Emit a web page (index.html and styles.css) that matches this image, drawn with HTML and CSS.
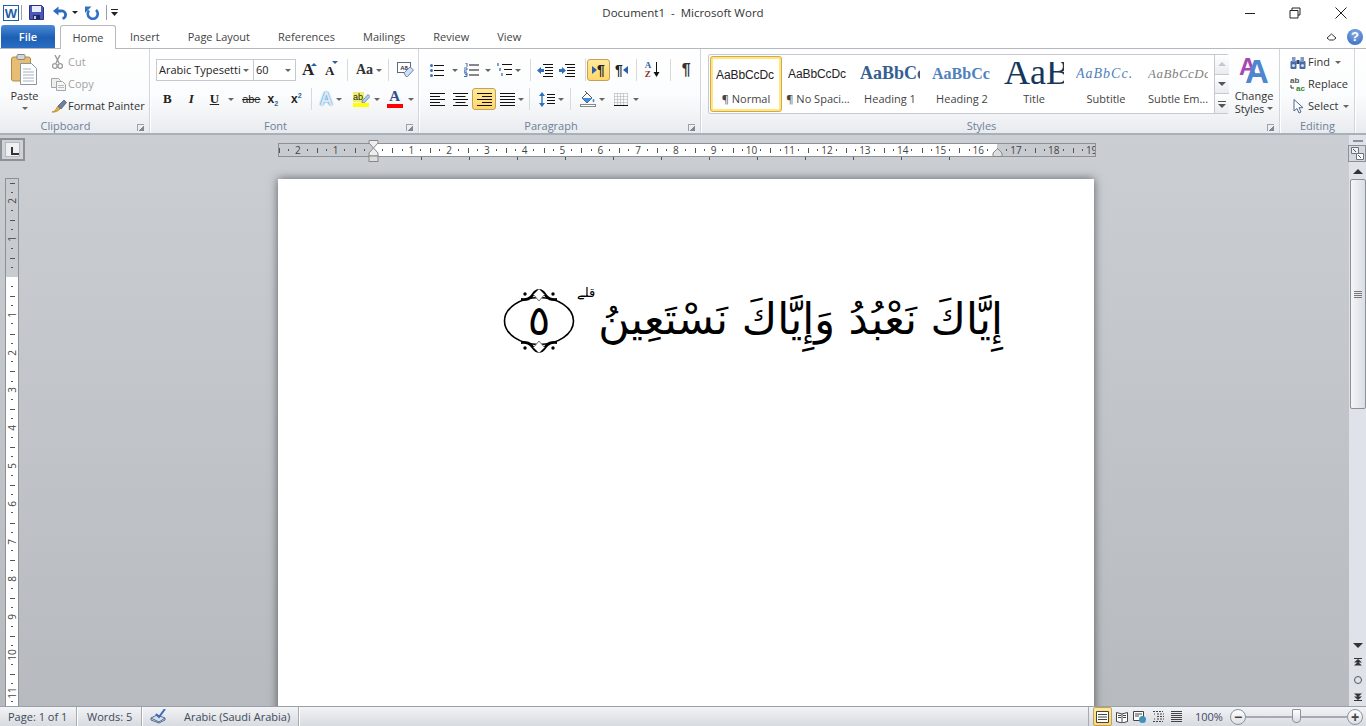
FILE: index.html
```html
<!DOCTYPE html>
<html lang="en">
<head>
<meta charset="utf-8">
<title>Document1 - Microsoft Word</title>
<link rel="stylesheet" href="styles.css">
</head>
<body>
<svg class="defs" aria-hidden="true">
  <defs>
    <symbol id="al" viewBox="0 0 15 13"><path d="M0 .5h15M0 3.5h10M0 6.5h15M0 9.5h10M0 12.5h15" stroke="#111" fill="none"/></symbol>
    <symbol id="ac" viewBox="0 0 15 13"><path d="M0 .5h15M2.500 3.500h10M0 6.500h15M2.500 9.500h10M0 12.500h15" stroke="#111" fill="none"/></symbol>
    <symbol id="ar" viewBox="0 0 15 13"><path d="M0 .5h15M5 3.500h10M0 6.500h15M5 9.500h10M0 12.500h15" stroke="#111" fill="none"/></symbol>
    <symbol id="aj" viewBox="0 0 15 13"><path d="M0 .5h15M0 3.500h15M0 6.500h15M0 9.500h15M0 12.500h15" stroke="#111" fill="none"/></symbol>
  </defs>
</svg>

<header class="titlebar">
  <div class="qat">
    <svg class="q-word" width="16" height="16" viewBox="0 0 16 16"><rect x=".5" y=".5" width="15" height="15" fill="#fff" stroke="#1f5fa8"/><text x="8" y="13" text-anchor="middle" class="svg-w">W</text></svg>
    <span class="q-sep q-sep1"></span>
    <svg class="q-save" width="15" height="15" viewBox="0 0 15 15"><path d="M.5.500h12l2 2v12H.500z" fill="#4b57b8" stroke="#2b3380"/><rect x="3" y="1" width="9" height="6" fill="#e8edf8"/><rect x="4" y="10" width="7" height="4.500" fill="#20285f"/><rect x="5" y="11" width="2" height="3" fill="#c4cbe6"/></svg>
    <svg class="q-undo" width="14" height="14" viewBox="0 0 14 14"><path d="M3 5h5a3.800 3.800 0 0 1 1.500 7.500" fill="none" stroke="#2a6cc0" stroke-width="2.800"/><path d="M0 5 5.500 .5v9z" fill="#2a6cc0"/></svg>
    <span class="drop dark q-d1"></span>
    <svg class="q-redo" width="14" height="14" viewBox="0 0 14 14"><path d="M4 4.500A5 5 0 1 0 11 4" fill="none" stroke="#2e72c8" stroke-width="2.600"/><path d="M0 .5h6.500L0 7z" fill="#2e72c8"/></svg>
    <span class="q-sep q-sep2"></span>
    <svg class="q-cust" width="7" height="8" viewBox="0 0 7 8"><path d="M0 .5h7" stroke="#222"/><path d="M0 3h7L3.500 7z" fill="#222"/></svg>
  </div>
  <div class="doc-title">Document1&nbsp; -&nbsp; Microsoft Word</div>
  <div class="winctl">
    <svg class="w-min" width="12" height="12" viewBox="0 0 12 12"><path d="M1 6.500h10" stroke="#222"/></svg>
    <svg class="w-res" width="12" height="12" viewBox="0 0 12 12"><path d="M3 3V1h8v7H9M1 3.500h8v7.500H1z" fill="none" stroke="#222"/></svg>
    <svg class="w-cls" width="12" height="12" viewBox="0 0 12 12"><path d="M.5.500l11 11M11.500.500l-11 11" stroke="#222"/></svg>
  </div>
</header>

<nav class="tabs">
  <div class="tab-file">File</div>
  <div class="tab tab-home">Home</div>
  <div class="tab">Insert</div>
  <div class="tab">Page Layout</div>
  <div class="tab">References</div>
  <div class="tab">Mailings</div>
  <div class="tab">Review</div>
  <div class="tab">View</div>
  <div class="tab-end">
    <svg width="11" height="8" viewBox="0 0 11 8"><path d="M1 5 5.500 1 10 5 7.500 7h-4z" fill="none" stroke="#333"/></svg>
    <span class="help">?</span>
  </div>
</nav>

<section class="ribbon">
  <!-- Clipboard -->
  <div class="group g-clip">
    <div class="g-body clip-body">
      <div class="paste">
        <svg width="27" height="31" viewBox="0 0 27 31"><rect x=".5" y="3" width="19" height="24" rx="2" fill="#e6bd73" stroke="#b38a45"/><rect x="6" y=".5" width="8" height="5" rx="1" fill="#d5d5d5" stroke="#888"/><path d="M9.500 9.500h11l5 5v16h-16z" fill="#fff" stroke="#8c95a3"/><path d="M12 15h8M12 18h11M12 21h11M12 24h11M12 27h11" stroke="#a9b3c2"/></svg>
        <span class="paste-label">Paste</span>
        <span class="drop"></span>
      </div>
      <div class="clip-list">
        <div class="clip-item off">
          <svg class="ci-cut" width="11" height="14" viewBox="0 0 11 14"><path d="M3 0l4 8M8 0 4 8" stroke="#9a9a9a" stroke-width="1.400" fill="none"/><circle cx="2.800" cy="11" r="2.300" fill="none" stroke="#9a9a9a" stroke-width="1.300"/><circle cx="8.200" cy="11" r="2.300" fill="none" stroke="#9a9a9a" stroke-width="1.300"/></svg>
          <span>Cut</span>
        </div>
        <div class="clip-item off">
          <svg class="ci-copy" width="15" height="13" viewBox="0 0 15 13"><path d="M.5.500h7l2 2v7h-9z" fill="#eee" stroke="#a5a5a5"/><path d="M5.500 3.500h6l3 3v6h-9z" fill="#f5f5f5" stroke="#a5a5a5"/><path d="M7 7.500h6M7 9.500h6" stroke="#bbb"/></svg>
          <span>Copy</span>
        </div>
        <div class="clip-item">
          <svg class="ci-fp" width="16" height="14" viewBox="0 0 16 14"><path d="M1 13C3 13 5 11 6.500 7.500L9 10c-2 2-5 3.500-8 3z" fill="#e8b33c" stroke="#a4791c" stroke-width=".7"/><path d="M7 7l3 3 5.500-6.500L13 1z" fill="#6d7fa3" stroke="#444e66" stroke-width=".7"/></svg>
          <span>Format Painter</span>
        </div>
      </div>
    </div>
    <div class="g-label">Clipboard<span class="launcher"></span></div>
  </div>

  <!-- Font -->
  <div class="group g-font">
    <div class="g-body rows">
      <div class="row">
        <div class="combo c-font"><span>Arabic Typesetti</span><span class="drop"></span></div>
        <div class="combo c-size"><span>60</span><span class="drop"></span></div>
        <span class="ic grow"><span class="big-a">A</span><i class="tip up"></i></span>
        <span class="ic shrink"><span class="small-a">A</span><i class="tip down"></i></span>
        <span class="vsep s1"></span>
        <span class="aa">Aa</span><span class="drop d-aa"></span>
        <span class="vsep s2"></span>
        <svg class="clear" width="17" height="16" viewBox="0 0 17 16"><rect x=".5" y=".5" width="13" height="10" fill="#fff" stroke="#5a6b85"/><text x="7" y="8" text-anchor="middle" class="svg-tiny">A8</text><path d="M7 11l6-6 3.500 3-6 6.500H9z" fill="#cfe0f5" stroke="#6a86ac"/></svg>
      </div>
      <div class="row r2">
        <span class="fmt b">B</span>
        <span class="fmt i">I</span>
        <span class="fmt u">U</span><span class="drop d-u"></span>
        <span class="fmt abe">abe</span>
        <span class="fmt x1">x<sub>2</sub></span>
        <span class="fmt x2">x<sup>2</sup></span>
        <span class="vsep s3"></span>
        <span class="fx">A</span><span class="drop d-fx"></span>
        <svg class="hl" width="17" height="15" viewBox="0 0 17 15"><rect x="0" y="0" width="11" height="10" fill="#f0ee6a"/><text x="0" y="8" class="svg-ab">ab</text><path d="M9 9l6-6.500 2 2-6 6.500H9z" fill="#b8cde8" stroke="#5c7aa6" stroke-width=".8"/><rect y="11" width="16" height="4" fill="#ffff00"/></svg>
        <span class="drop d-hl"></span>
        <span class="fc"><span class="fc-a">A</span><i></i></span><span class="drop d-fc"></span>
      </div>
    </div>
    <div class="g-label">Font<span class="launcher"></span></div>
  </div>

  <!-- Paragraph -->
  <div class="group g-para">
    <div class="g-body rows">
      <div class="row">
        <svg class="p-bul" width="14" height="13" viewBox="0 0 14 13"><path d="M4 1.500h10M4 6.500h10M4 11.500h10" stroke="#111"/><circle cx="1.500" cy="1.500" r="1.500" fill="#3c6fb5"/><circle cx="1.500" cy="6.500" r="1.500" fill="#3c6fb5"/><circle cx="1.500" cy="11.500" r="1.500" fill="#3c6fb5"/></svg>
        <span class="drop d-p1"></span>
        <svg class="p-num" width="15" height="14" viewBox="0 0 15 14"><path d="M5 2h10M5 7h10M5 12h10" stroke="#111"/><path d="M1 0h2v4M0 5h3v2H0v2h3M0 10h3v3.500H0M1 11.700h2" fill="none" stroke="#3c6fb5"/></svg>
        <span class="drop d-p2"></span>
        <svg class="p-multi" width="15" height="14" viewBox="0 0 15 14"><path d="M5 1.500h10M7 6.500h8M9 11.500h6" stroke="#111"/><path d="M1 0v3M3 5v3M5 10v3" stroke="#3c6fb5" stroke-width="1.300"/></svg>
        <span class="drop d-p3"></span>
        <span class="vsep s4"></span>
        <svg class="p-dec" width="16" height="13" viewBox="0 0 16 13"><path d="M6 .5h10M8 3.500h8M8 6.500h8M8 9.500h8M6 12.500h10" stroke="#111"/><path d="M0 6.500 4 3v2h3v3H4v2z" fill="#2f6fc0"/></svg>
        <svg class="p-inc" width="16" height="13" viewBox="0 0 16 13"><path d="M6 .5h10M8 3.500h8M8 6.500h8M8 9.500h8M6 12.500h10" stroke="#111"/><path d="M7 6.500 3 3v2H0v3h3v2z" fill="#2f6fc0"/></svg>
        <span class="vsep s5"></span>
        <span class="act ltr"><i class="tri-r"></i><b>¶</b></span>
        <span class="rtl"><b>¶</b><i class="tri-l"></i></span>
        <span class="vsep s6"></span>
        <span class="sort"><span class="sort-a"><em>A</em><em class="z">Z</em></span><svg width="7" height="16" viewBox="0 0 7 16"><path d="M3.500 0v13" stroke="#111"/><path d="M.5 10h6l-3 5z" fill="#111"/></svg></span>
        <span class="vsep s7"></span>
        <span class="pil">¶</span>
      </div>
      <div class="row">
        <svg class="a1" width="15" height="13"><use href="#al"/></svg>
        <svg class="a2" width="15" height="13"><use href="#ac"/></svg>
        <span class="act a3"><svg width="15" height="13"><use href="#ar"/></svg></span>
        <svg class="a4" width="15" height="13"><use href="#aj"/></svg>
        <span class="drop d-j"></span>
        <span class="vsep s8"></span>
        <svg class="ls" width="16" height="15" viewBox="0 0 16 15"><path d="M3 3v9" stroke="#2f6fc0" stroke-width="1.400"/><path d="M3 0 6 4H0zM3 15 6 11H0z" fill="#2f6fc0"/><path d="M8 2.500h8M8 5.500h8M8 8.500h8M8 11.500h8" stroke="#111"/></svg>
        <span class="drop d-ls"></span>
        <span class="vsep s9"></span>
        <svg class="shade" width="16" height="16" viewBox="0 0 16 16"><path d="M2 7 7 2l5 5-5 5z" fill="#fff" stroke="#555"/><path d="M2 7h10l-5 5z" fill="#3d8edb"/><path d="M7 2 5 0" stroke="#555"/><path d="M13 8s-1 2 0 3 2-1 1-3z" fill="#3d8edb"/><rect x=".5" y="13.500" width="15" height="2" fill="#fff" stroke="#888"/></svg>
        <span class="drop d-sh"></span>
        <svg class="bord" width="14" height="13" viewBox="0 0 14 13"><path d="M.5.500h13M.5 3.500h13M.5 6.500h13M.5 9.500h13M.5.500v12M3.500.500v12M6.500.500v12M9.500.500v12M13.500.500v12" stroke="#aaa" stroke-dasharray="1 1"/><path d="M0 12.500h14" stroke="#111"/></svg>
        <span class="drop d-bo"></span>
      </div>
    </div>
    <div class="g-label">Paragraph<span class="launcher"></span></div>
  </div>

  <!-- Styles -->
  <div class="group g-styles">
    <div class="g-body styles-body">
      <div class="gallery">
        <div class="st st-on"><div class="pv pv-n">AaBbCcDc</div><div class="nm">¶ Normal</div></div>
        <div class="st"><div class="pv pv-n">AaBbCcDc</div><div class="nm">¶ No Spaci...</div></div>
        <div class="st"><div class="pv pv-h1">AaBbCc</div><div class="nm">Heading 1</div></div>
        <div class="st"><div class="pv pv-h2">AaBbCc</div><div class="nm">Heading 2</div></div>
        <div class="st"><div class="pv pv-t">AaB</div><div class="nm">Title</div></div>
        <div class="st"><div class="pv pv-s">AaBbCc.</div><div class="nm">Subtitle</div></div>
        <div class="st"><div class="pv pv-e">AaBbCcDc</div><div class="nm">Subtle Em...</div></div>
        <div class="gal-btns">
          <span class="gb"><i class="gup"></i></span>
          <span class="gb"><i class="gdn"></i></span>
          <span class="gb"><i class="gmore"></i></span>
        </div>
      </div>
      <div class="change">
        <svg width="32" height="32" viewBox="0 0 32 32"><text x="1" y="23" class="svg-aa1">A</text><text x="7" y="31" class="svg-aa2">A</text></svg>
        <span class="ch-t">Change</span>
        <span class="ch-t">Styles<span class="drop d-ch"></span></span>
      </div>
    </div>
    <div class="g-label">Styles<span class="launcher"></span></div>
  </div>

  <!-- Editing -->
  <div class="group g-edit">
    <div class="g-body edit-list">
      <div class="ed">
        <svg width="15" height="13" viewBox="0 0 15 13"><rect x="0" y="5" width="6" height="8" rx="1" fill="#4a69a5"/><rect x="9" y="5" width="6" height="8" rx="1" fill="#4a69a5"/><rect x="1.500" y="1" width="3.500" height="5" fill="#7f98c4"/><rect x="10" y="1" width="3.500" height="5" fill="#7f98c4"/><rect x="6" y="4" width="3" height="4" fill="#33486f"/><circle cx="3" cy="9.500" r="1.600" fill="#cfdcf0"/><circle cx="12" cy="9.500" r="1.600" fill="#cfdcf0"/></svg>
        <span>Find</span><span class="drop d-ed"></span>
      </div>
      <div class="ed">
        <svg width="16" height="15" viewBox="0 0 16 15"><text x="0" y="6" class="svg-rp">ab</text><text x="6" y="14" class="svg-rp g">ac</text><path d="M1 8v3h3" fill="none" stroke="#333"/></svg>
        <span>Replace</span>
      </div>
      <div class="ed">
        <svg width="15" height="15" viewBox="0 0 15 15"><path d="M3.500 .5v11.500l3-2.500 2 4.500 2-1-2-4.300h4z" fill="#fff" stroke="#50688c"/></svg>
        <span>Select</span><span class="drop d-ed"></span>
      </div>
    </div>
    <div class="g-label">Editing</div>
  </div>
</section>

<main class="workspace">
  <aside class="left-col">
    <div class="tabstop"><span class="tab-l"></span></div>
    <div class="vruler">
      <span class="vc"><b>2</b></span><span class="vc"><b>1</b></span><span class="vc"></span>
      <span class="vc"><b>1</b></span><span class="vc"><b>2</b></span><span class="vc"><b>3</b></span><span class="vc"><b>4</b></span><span class="vc"><b>5</b></span><span class="vc"><b>6</b></span><span class="vc"><b>7</b></span><span class="vc"><b>8</b></span><span class="vc"><b>9</b></span><span class="vc"><b>10</b></span><span class="vc"><b>11</b></span>
    </div>
  </aside>

  <div class="canvas">
    <div class="hruler-wrap">
      <div class="hruler">
        <span class="hc">2</span><span class="hc">1</span><span class="hc"></span>
        <span class="hc">1</span><span class="hc">2</span><span class="hc">3</span><span class="hc">4</span><span class="hc">5</span><span class="hc">6</span><span class="hc">7</span><span class="hc">8</span><span class="hc">9</span><span class="hc">10</span><span class="hc">11</span><span class="hc">12</span><span class="hc">13</span><span class="hc">14</span><span class="hc">15</span><span class="hc">16</span><span class="hc">17</span><span class="hc">18</span><span class="hc">19</span>
      </div>
      <svg class="ind-l" width="11" height="22" viewBox="0 0 11 22"><path d="M1 .5h9V3L5.500 8 1 3z" fill="#eee" stroke="#888"/><path d="M5.500 8 10 13v3H1v-3z" fill="#eee" stroke="#888"/><rect x="1" y="16" width="9" height="5.500" fill="#ddd" stroke="#888"/></svg>
      <svg class="ind-r" width="11" height="9" viewBox="0 0 11 9"><path d="M5.500 .5 10 5v3.500H1V5z" fill="#ddd" stroke="#888"/></svg>
      <div class="stops"></div>
    </div>
    <article class="page">
      <p class="ayah" dir="rtl" lang="ar"><span class="ayah-text">إِيَّاكَ نَعْبُدُ وَإِيَّاكَ نَسْتَعِينُ</span> <span class="waqf">قلے</span> <svg class="verse" width="74" height="66" viewBox="0 0 74 66"><ellipse cx="37" cy="33" rx="34.500" ry="23.500" fill="#fff" stroke="#000" stroke-width="1.600"/><path d="M19 11.500C25 12 28 11 31 6.500 33 3.500 35 2.500 37 2.500s4 1 6 4c3 4.500 6 5.500 12 5M19 54.500C25 54 28 55 31 59.500c2 3 4 4 6 4s4-1 6-4c3-4.500 6-5.500 12-5" fill="none" stroke="#000" stroke-width="2.800"/><path d="M37 1l5.500 5.500L37 13l-5.500-6.500zM37 65l5.500-5.500L37 53l-5.500 6.500z" fill="#fff" stroke="#777"/><circle cx="23" cy="6" r="1.700"/><circle cx="51" cy="6" r="1.700"/><circle cx="23" cy="60" r="1.700"/><circle cx="51" cy="60" r="1.700"/><text x="37" y="47" text-anchor="middle" class="svg-five">٥</text></svg></p>
    </article>
  </div>

  <aside class="vscroll">
    <span class="split"></span>
    <span class="vr-btn"><svg width="13" height="13" viewBox="0 0 13 13"><path d="M.5.500h7v6h-7z" fill="#eef0f4" stroke="#6d737c"/><path d="M5.500 6.500h7v6h-7z" fill="#fff" stroke="#6d737c"/><path d="M2 2l3 3M7 8l3 3" stroke="#555"/></svg></span>
    <span class="sb up"><i></i></span>
    <div class="thumb"><span class="grip"></span></div>
    <span class="sb-fill"></span>
    <span class="sb dn"><i></i></span>
    <span class="sb nav"><svg width="8" height="8" viewBox="0 0 8 8"><path d="M0 .5h8" stroke="#333"/><path d="M4 1 8 4.500H0zM4 4 8 7.500H0z" fill="#333"/></svg></span>
    <span class="sb nav"><span class="circle"></span></span>
    <span class="sb nav"><svg width="8" height="8" viewBox="0 0 8 8"><path d="M0 7.500h8" stroke="#333"/><path d="M4 7 8 3.500H0zM4 4 8 .5H0z" fill="#333"/></svg></span>
  </aside>
</main>

<footer class="status">
  <span class="st-cell c1">Page: 1 of 1</span>
  <span class="st-cell c2">Words: 5</span>
  <span class="st-cell c3">
    <svg width="17" height="15" viewBox="0 0 17 15"><path d="M1 9l6-3 8 3-6 4z" fill="#d5dfee" stroke="#51698f"/><path d="M1 9v2l8 3 6-3V9" fill="none" stroke="#51698f"/><path d="M6 5l3 3 6-8" fill="none" stroke="#3d6cb5" stroke-width="2"/></svg>
    <span class="lang">Arabic (Saudi Arabia)</span>
  </span>
  <div class="st-right">
    <span class="view on"><svg width="13" height="12"><path d="M.5.500h12v11H.500zM2 3.500h9M2 6h9M2 8.500h9" fill="#fff" stroke="#444"/></svg></span>
    <svg class="v2" width="12" height="12" viewBox="0 0 12 12"><path d="M.5 1.500 6 3l5.500-1.500v9L6 12 .5 10.500zM6 3v9M2 4.500h3M2 6.500h3M7 4.500h3M7 6.500h3" fill="#fff" stroke="#444"/></svg>
    <svg class="v3" width="13" height="12" viewBox="0 0 13 12"><path d="M.5.500h10v9H.500zM2 3h7M2 5h4" fill="#fff" stroke="#444"/><circle cx="9.500" cy="8.500" r="3.500" fill="#3f8dd0"/><path d="M8 7l3 1-2 3z" fill="#4fa64a"/></svg>
    <svg class="v4" width="11" height="11" viewBox="0 0 11 11"><path d="M0 .5h10M4 3h7M4 5.500h7M4 8h7M0 10.500h10M1 3h1M1 8h1" stroke="#444" stroke-dasharray="2 1"/></svg>
    <svg class="v5" width="11" height="11" viewBox="0 0 11 11"><path d="M0 .5h11M0 2.500h11M0 4.500h11M0 6.500h11M0 8.500h11M0 10.500h11" stroke="#444"/></svg>
    <span class="zoompct">100%</span>
    <span class="zbtn z-minus">−</span>
    <span class="zslider"><i></i></span>
    <span class="zbtn z-plus">+</span>
  </div>
</footer>
</body>
</html>
```

FILE: styles.css
```css
* { box-sizing: border-box; }
html, body { margin: 0; padding: 0; }
body {
  width: 1366px; height: 726px; overflow: hidden;
  display: flex; flex-direction: column;
  background: #fff;
  font: 11px/1.2 "Open Sans", "Noto Sans", sans-serif;
  color: #333;
}
.defs { position: absolute; width: 0; height: 0; }
svg { display: block; flex: none; }
i, em { font-style: normal; }

/* title bar */
.titlebar { height: 25px; flex: none; display: grid; grid-template-columns: 1fr auto 1fr; align-items: center; background: #fff; }
.qat { display: flex; align-items: center; padding-left: 3px; }
.q-sep { width: 1px; height: 15px; background: #9aa0a8; }
.q-sep1 { margin-left: 2px; }
.q-save { margin-left: 7px; }
.q-undo { margin-left: 9px; }
.q-d1 { margin-left: 5px; }
.q-redo { margin-left: 7px; }
.q-sep2 { margin-left: 7px; }
.q-cust { margin-left: 4px; }
.svg-w { font: bold 13px "Liberation Sans", sans-serif; fill: #1f5fa8; }
.doc-title { font-size: 11.500px; color: #333; }
.winctl { display: flex; justify-content: flex-end; align-items: center; }
.w-res { margin-left: 33px; }
.w-cls { margin-left: 34px; margin-right: 19px; }

/* tabs */
.tabs { height: 24px; flex: none; display: flex; align-items: stretch; padding-left: 1px; border-bottom: 1px solid #b4b9c0; background: #fff; font-size: 11px; }
.tab-file { width: 54px; display: flex; align-items: center; justify-content: center; color: #fff; font-weight: 600; background: linear-gradient(#4b8ad6, #1d5fb4 55%, #2a6dc2); border-radius: 3px 3px 0 0; }
.tab { padding: 0 14px; display: flex; align-items: center; color: #444; }
.tab-home { width: 56px; margin-left: 5px; margin-bottom: -1px; padding: 0; justify-content: center; background: #fff; border: 1px solid #b4b9c0; border-bottom: 0; border-radius: 3px 3px 0 0; position: relative; }
.tab-end { margin-left: auto; display: flex; align-items: center; padding-right: 3px; }
.help { width: 16px; height: 16px; margin-left: 10px; border-radius: 50%; background: radial-gradient(circle at 50% 30%, #86ade6, #2f64b8); color: #fff; font: bold 13px/16px "Liberation Sans", sans-serif; text-align: center; }

/* ribbon */
.ribbon { height: 86px; flex: none; display: flex; background: linear-gradient(#fff, #fbfcfd 55%, #e8ebef); border-bottom: 2px solid #aab0b8; }
.group { display: flex; flex-direction: column; border-right: 1px solid #d2d6dc; box-shadow: 1px 0 0 #fff; margin-right: 1px; }
.g-body { flex: 1; min-height: 0; }
.g-label { height: 16px; flex: none; position: relative; padding-right: 18px; text-align: center; color: #6f7f95; font-size: 11px; line-height: 17px; }
.launcher { position: absolute; right: 5px; top: 7px; width: 7px; height: 7px; border: 1px solid #9aa1ab; border-width: 1px 0 0 1px; background: linear-gradient(135deg, transparent 55%, #7f8793 55%); }
.g-clip { width: 150px; }
.g-font { width: 268px; }
.g-para { width: 281px; }
.g-styles { width: 578px; }
.g-edit { width: 74px; }
.g-edit .g-label { padding-right: 0; }

.clip-body { display: flex; }
.paste { width: 49px; flex: none; display: flex; flex-direction: column; align-items: center; padding-top: 5px; }
.paste-label { margin-top: 4px; color: #333; }
.paste .drop { margin-top: 5px; }
.clip-list { padding-top: 2px; }
.clip-item { height: 22px; display: flex; align-items: center; color: #333; padding-left: 2px; }
.ci-cut { margin: 0 5px 0 1px; }
.ci-copy { margin-right: 2px; }
.ci-fp { margin-right: 1px; }
.clip-item.off { color: #a3a3a3; }
.clip-item span { white-space: nowrap; }

.drop { display: inline-block; width: 0; height: 0; flex: none; border: 3px solid transparent; border-top: 3px solid #666; border-bottom: 0; }
.drop.dark { border-top-color: #222; }

.rows { display: flex; flex-direction: column; padding-top: 10px; }
.row { height: 22px; display: flex; align-items: center; white-space: nowrap; }
.row + .row { margin-top: 7px; }
.vsep { width: 1px; height: 22px; flex: none; background: #d6d9de; }
.g-font .rows { padding-left: 5px; }
.g-para .rows { padding-left: 10px; }

.combo { height: 22px; display: flex; align-items: center; justify-content: space-between; padding: 0 4px 0 2px; border: 1px solid #c6cad0; background: #fff; color: #222; }
.c-font { width: 98px; }
.c-size { width: 43px; margin-left: -1px; }
.ic { position: relative; display: block; flex: none; font-family: "Liberation Serif", serif; font-weight: bold; color: #222; }
.grow { width: 15px; margin-left: 6px; }
.shrink { width: 13px; margin-left: 8px; }
.big-a { font-size: 17px; line-height: 18px; display: block; }
.small-a { font-size: 13px; line-height: 18px; display: block; padding-top: 2px; }
.tip { position: absolute; right: 0; top: 1px; border: 3px solid transparent; }
.tip.up { border-bottom: 3px solid #2f5e9e; border-top: 0; }
.tip.down { border-top: 3px solid #2f5e9e; border-bottom: 0; }
.s1 { margin-left: 9px; }
.aa { margin-left: 8px; font: bold 14px "Liberation Serif", serif; color: #333; }
.d-aa { margin-left: 3px; }
.s2 { margin-left: 6px; }
.clear { margin-left: 8px; }
.svg-tiny { font: bold 6px "Liberation Sans", sans-serif; fill: #334; }

.fmt { flex: none; color: #222; font-family: "Liberation Serif", serif; font-weight: bold; font-size: 13px; line-height: 16px; }
.b { margin-left: 7px; }
.i { margin-left: 17px; font-style: italic; }
.u { margin-left: 16px; text-decoration: underline; }
.d-u { margin-left: 9px; }
.abe { margin-left: 8px; font-family: "Liberation Sans", sans-serif; font-weight: normal; font-size: 11px; text-decoration: line-through; }
.x1 { margin-left: 7px; font-family: "Liberation Sans", sans-serif; font-size: 12px; }
.x2 { margin-left: 13px; font-family: "Liberation Sans", sans-serif; font-size: 12px; }
.fmt sub, .fmt sup { font-size: 7px; color: #2f5e9e; line-height: 0; }
.s3 { margin-left: 9px; }
.fx { margin-left: 8px; font: bold 18px/18px "Liberation Sans", sans-serif; color: #d7e8f8; text-shadow: 0 0 1px #2f7fc8, 0 0 2px #4d9ad8; }
.d-fx { margin-left: 3px; }
.hl { margin-left: 11px; }
.svg-ab { font: 9px "Liberation Sans", sans-serif; fill: #222; }
.d-hl { margin-left: 4px; }
.fc { margin-left: 7px; width: 16px; display: flex; flex-direction: column; align-items: center; }
.fc-a { font: bold 15px/13px "Liberation Serif", serif; color: #2b4f88; }
.fc i { display: block; width: 16px; height: 4px; background: #f00; margin-top: 1px; }
.d-fc { margin-left: 5px; }

.d-p1 { margin-left: 8px; }
.p-num { margin-left: 6px; }
.d-p2 { margin-left: 6px; }
.p-multi { margin-left: 6px; }
.d-p3 { margin-left: 3px; }
.s4 { margin-left: 9px; }
.p-dec { margin-left: 6px; }
.p-inc { margin-left: 6px; }
.s5 { margin-left: 10px; }
.act { flex: none; height: 22px; display: flex; align-items: center; justify-content: center; background: linear-gradient(#ffe99a, #ffd76a); border: 1px solid #c2a15a; border-radius: 3px; }
.ltr { width: 23px; margin-left: 1px; }
.ltr b, .rtl b { font: bold 14px/14px "Liberation Sans", sans-serif; color: #222; }
.tri-r { width: 0; height: 0; border: 4px solid transparent; border-left: 5px solid #2a5ea8; border-right: 0; }
.tri-l { width: 0; height: 0; border: 4px solid transparent; border-right: 5px solid #2a5ea8; border-left: 0; }
.rtl { margin-left: 5px; display: flex; align-items: center; }
.s6 { margin-left: 8px; }
.sort { margin-left: 8px; display: flex; align-items: center; width: 18px; }
.sort-a { display: flex; flex-direction: column; font: bold 9px/9px "Liberation Serif", serif; color: #2f5e9e; margin-right: 2px; }
.sort-a .z { color: #8a2f2f; }
.s7 { margin-left: 7px; }
.pil { margin-left: 11px; font: bold 16px/16px "Liberation Sans", sans-serif; color: #333; }
.a2 { margin-left: 8px; }
.a3 { width: 24px; margin-left: 4px; }
.a4 { margin-left: 4px; }
.d-j { margin-left: 3px; }
.s8 { margin-left: 5px; }
.ls { margin-left: 9px; }
.d-ls { margin-left: 3px; }
.s9 { margin-left: 6px; }
.shade { margin-left: 9px; }
.d-sh { margin-left: 3px; }
.bord { margin-left: 9px; }
.d-bo { margin-left: 5px; }

/* styles */
.styles-body { display: flex; padding: 5px 0 0 6px; }
.gallery { width: 521px; height: 60px; display: flex; border: 1px solid #c6cad0; border-radius: 2px; background: #fff; padding: 1px 0 1px 1px; }
.st { width: 72px; flex: none; display: flex; flex-direction: column; align-items: center; }
.st-on { border: 3px solid #ffe680; outline: 1px solid #d2a94a; outline-offset: -1px; border-radius: 3px; }
.pv { width: 60px; height: 35px; overflow: hidden; display: flex; align-items: center; white-space: nowrap; justify-content: center; color: #222; }
.st-on .pv { height: 32px; }
.nm { font-size: 11px; color: #444; padding-top: 1px; white-space: nowrap; }
.pv-n { font: 12px "Liberation Sans", sans-serif; letter-spacing: -.1px; justify-content: flex-start; }
.pv-h1 { font: bold 18px "Liberation Serif", serif; color: #365f91; justify-content: flex-start; }
.pv-h2 { font: bold 16px "Liberation Serif", serif; color: #4f81bd; justify-content: flex-start; }
.pv-t { height: 24px; margin: 6px 0 5px; padding-bottom: 2px; font: 36px/24px "Liberation Serif", serif; color: #17365d; align-items: flex-end; justify-content: flex-start; }
.pv-s { font: italic 14px "Liberation Serif", serif; color: #4f81bd; letter-spacing: 1px; justify-content: flex-start; }
.pv-e { font: italic 13px "Liberation Serif", serif; color: #808080; letter-spacing: .5px; justify-content: flex-start; }
.gal-btns { margin-left: auto; width: 15px; flex: none; display: flex; flex-direction: column; margin-top: -1px; margin-bottom: -1px; border-left: 1px solid #c6cad0; }
.gb { flex: 1; display: flex; align-items: center; justify-content: center; border-bottom: 1px solid #c6cad0; background: linear-gradient(#fff, #e9ebef); }
.gb:last-child { border-bottom: 0; }
.gup { border: 4px solid transparent; border-bottom: 4px solid #c4c7cc; border-top: 0; }
.gdn { border: 4px solid transparent; border-top: 4px solid #555; border-bottom: 0; }
.gmore { width: 8px; height: 6px; border-top: 1px solid #555; }
.gmore::after { content: ""; display: block; margin-top: 2px; border: 4px solid transparent; border-top: 4px solid #555; border-bottom: 0; }
.change { flex: 1; display: flex; flex-direction: column; align-items: center; color: #333; }
.change svg { margin-bottom: 5px; margin-top: -2px; }
.ch-t { line-height: 13px; display: flex; align-items: center; }
.d-ch { margin-left: 3px; }
.svg-aa1 { font: bold 24px "Liberation Sans", sans-serif; fill: #a548b0; }
.svg-aa2 { font: bold 33px "Liberation Sans", sans-serif; fill: #4e86cf; }

.edit-list { padding: 2px 0 0 9px; }
.ed { height: 22px; display: flex; align-items: center; color: #333; }
.ed span:first-of-type { margin-left: 2px; }
.ed svg { width: 16px; }
.d-ed { margin-left: 5px; }
.svg-rp { font: bold 8px "Liberation Sans", sans-serif; fill: #555; }
.svg-rp.g { fill: #2c8a2c; }

/* workspace */
.workspace { flex: 1; min-height: 0; display: flex; background: linear-gradient(#cbcfd4, #b7babe); }
.left-col { width: 25px; flex: none; padding-top: 3px; }
.tabstop { width: 25px; height: 23px; border: 2px solid #8d9197; background: #cfd2d7; display: flex; align-items: center; justify-content: center; }
.tab-l { width: 15px; height: 15px; background: #eef0f2; border: 1px solid #b5b9bf; display: block; }
.tab-l::after { content: ""; display: block; width: 6px; height: 6px; margin: 4px 0 0 5px; border-left: 2px solid #333; border-bottom: 2px solid #333; }
.vruler { width: 14px; height: 540px; margin: 17px 0 0 5px; padding-top: 3.500px; border: 1px solid #8d9197; border-bottom: 0; display: flex; flex-direction: column; overflow: hidden; background: linear-gradient(#c8cbd0 98px, #fff 98px); }
.vc {
  height: 37.800px; flex: none; display: flex; align-items: center; justify-content: center;
  background:
    linear-gradient(#555, #555) center top / 5px 1px no-repeat,
    linear-gradient(#555, #555) center 25% / 2px 1px no-repeat,
    linear-gradient(#555, #555) center 75% / 2px 1px no-repeat;
}
.vc b { font-weight: normal; font-size: 10px; line-height: 10px; color: #444; display: block; transform: rotate(-90deg); }

.canvas { flex: 1; min-width: 0; overflow: hidden; padding-left: 253px; }
.hruler-wrap { width: 818px; height: 25px; padding-top: 8px; position: relative; }
.hruler { height: 14px; border: 1px solid #8d9197; display: flex; overflow: hidden; background: linear-gradient(to right, #c8cbd0 94px, #fff 94px, #fff 718px, #c8cbd0 718px); }
.hc {
  width: 37.800px; flex: none; font-size: 10px; line-height: 12px; text-align: center; color: #444;
  background:
    linear-gradient(#555, #555) left center / 1px 5px no-repeat,
    linear-gradient(#555, #555) 25% center / 1px 2px no-repeat,
    linear-gradient(#555, #555) 75% center / 1px 2px no-repeat;
}
.ind-l { position: absolute; left: 90px; top: 5px; }
.ind-r { position: absolute; left: 714px; top: 13px; }
.stops { height: 3px; margin-left: 143px; width: 576px; background: repeating-linear-gradient(to right, #555 0, #555 1px, transparent 1px, transparent 48px); }
.page { width: 816px; height: 560px; margin-top: 19px; background: #fff; box-shadow: 0 0 9px rgba(0,0,0,.55); padding: 105px 91px 0 0; }
.ayah { margin: 0; display: flex; align-items: center; justify-content: flex-start; gap: 3px; font-family: "DejaVu Sans", sans-serif; color: #000; white-space: nowrap; }
.ayah-text { font-size: 43px; line-height: 66px; }
.waqf { font-size: 13px; align-self: flex-start; margin: 1px 0 0 -2px; }
.verse { flex: none; margin-top: 4px; }
.svg-five { font: 42px "DejaVu Sans", sans-serif; fill: #000; }

.vscroll { width: 17px; flex: none; display: flex; flex-direction: column; align-items: center; background: #dfe3e9; }
.split { width: 10px; height: 2px; background: #8d9197; margin-top: 5px; flex: none; }
.vr-btn { width: 18px; height: 17px; margin: 3px 0 0 -1px; flex: none; border: 1px solid #8d9197; background: #d5d8de; display: flex; align-items: center; justify-content: center; }
.sb { height: 16px; width: 17px; flex: none; display: flex; align-items: center; justify-content: center; }
.up { margin-top: 1px; }
.up i { border: 5px solid transparent; border-bottom: 5px solid #333; border-top: 0; }
.dn i { border: 5px solid transparent; border-top: 5px solid #333; border-bottom: 0; }
.thumb { width: 16px; height: 230px; flex: none; display: flex; align-items: center; justify-content: center; border: 1px solid #8d9197; border-radius: 2px; background: linear-gradient(to right, #f5f6f8, #d9dde5); }
.grip { width: 8px; height: 7px; background: repeating-linear-gradient(#777 0, #777 1px, transparent 1px, transparent 2px); }
.sb-fill { flex: 1; }
.nav { height: 17.500px; background: #dfe3e9; }
.circle { width: 8px; height: 8px; border: 1px solid #555; border-radius: 50%; }

/* status */
.status { height: 20px; flex: none; display: flex; align-items: center; border-top: 1px solid #9aa0a8; background: linear-gradient(#f2f3f6, #d8dbe0); color: #3e4a5a; font-size: 11px; }
.st-cell { height: 100%; display: flex; align-items: center; border-right: 1px solid #a6abb2; padding-left: 8px; box-shadow: 1px 0 0 #fff; }
.c1 { width: 77px; }
.c2 { width: 65px; padding-left: 10px; }
.c3 { width: 157px; }
.lang { margin-left: 17px; }
.st-right { margin-left: auto; height: 100%; display: flex; align-items: center; border-left: 1px solid #a6abb2; padding-left: 4px; }
.view { width: 19px; height: 19px; display: flex; align-items: center; justify-content: center; background: linear-gradient(#ffe99a, #ffd76a); border: 1px solid #c2a15a; border-radius: 2px; }
.v2 { margin-left: 4px; }
.v3 { margin-left: 5px; }
.v4 { margin-left: 7px; }
.v5 { margin-left: 7px; }
.zoompct { margin-left: 13px; width: 28px; color: #3e4a66; }
.zbtn { width: 16px; height: 16px; flex: none; border: 1px solid #8b929c; border-radius: 50%; background: linear-gradient(#fff, #dde0e5); display: flex; align-items: center; justify-content: center; font: bold 14px/14px "Liberation Sans", sans-serif; color: #444; }
.z-minus { margin-left: 7px; }
.z-plus { margin-right: 3px; }
.zslider { width: 101px; height: 2px; background: #a4abb6; position: relative; }
.zslider i { position: absolute; left: 46px; top: -7px; width: 9px; height: 14px; background: linear-gradient(#fff, #d8dbe0); border: 1px solid #8b929c; border-radius: 1px 1px 4px 4px; }
```
